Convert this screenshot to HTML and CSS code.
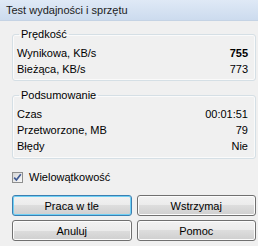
FILE: index.html
```html
<!DOCTYPE html>
<html lang="pl">
<head>
<meta charset="utf-8">
<link rel="stylesheet" href="styles.css">
</head>
<body>
<div class="titlebar">Test wydajności i sprzętu</div>
<div class="content">
  <fieldset class="group">
    <legend>Prędkość</legend>
    <div class="row"><span>Wynikowa, KB/s</span><span class="bold">755</span></div>
    <div class="row"><span>Bieżąca, KB/s</span><span>773</span></div>
  </fieldset>
  <fieldset class="group group2">
    <legend>Podsumowanie</legend>
    <div class="row"><span>Czas</span><span>00:01:51</span></div>
    <div class="row"><span>Przetworzone, MB</span><span>79</span></div>
    <div class="row"><span>Błędy</span><span>Nie</span></div>
  </fieldset>
  <label class="check">
    <span class="box"><svg width="9" height="9" viewBox="0 0 9 9"><path d="M1.2 4.6 L3.4 7 L7.8 1.3" fill="none" stroke="#3f5a93" stroke-width="1.7"/></svg></span>
    <span>Wielowątkowość</span>
  </label>
  <div class="buttons">
    <button class="btn default">Praca w tle</button>
    <button class="btn">Wstrzymaj</button>
    <button class="btn">Anuluj</button>
    <button class="btn">Pomoc</button>
  </div>
</div>
</body>
</html>
```

FILE: styles.css
```css
html, body {
  margin: 0;
  padding: 0;
  background: #f0f0f0;
  font-family: "Liberation Sans", Arial, sans-serif;
  font-size: 11px;
  color: #000;
}
.titlebar {
  height: 20px;
  line-height: 20px;
  padding-left: 6px;
  background: linear-gradient(#dfe9f6, #ccdbee);
  color: #1c1c1c;
  font-size: 11px;
  border-bottom: 1px solid #c5d3e4;
}
.content {
  padding: 7px 2px 0 12px;
}
.group {
  margin: 0;
  padding: 4px 7px 3px 4px;
  border: 1px solid #d5dfe5;
  border-radius: 3px;
  box-shadow: inset 0 0 0 1px #fafafa;
  min-width: 0;
}
.group legend {
  padding: 0 2px;
  margin-left: 2px;
  line-height: 13px;
}
.group2 {
  margin-top: 8px;
  padding-bottom: 4px;
}
.row {
  display: flex;
  justify-content: space-between;
  height: 16px;
  line-height: 16px;
}
.bold {
  font-weight: bold;
}
.check {
  display: flex;
  align-items: center;
  gap: 6px;
  margin-top: 11px;
  height: 15px;
  line-height: 15px;
}
.box {
  width: 9px;
  height: 9px;
  border: 1px solid #8e8f8f;
  background: linear-gradient(135deg, #d6d6d6, #fafafa);
  display: flex;
}
.buttons {
  display: grid;
  grid-template-columns: 1fr 1fr;
  column-gap: 5px;
  row-gap: 4px;
  margin-top: 10px;
}
.btn {
  height: 21px;
  padding: 0;
  font-family: "Liberation Sans", Arial, sans-serif;
  font-size: 11px;
  color: #000;
  border: 1px solid #707070;
  border-radius: 3px;
  background: linear-gradient(#f2f2f2 0%, #ebebeb 50%, #dddddd 50%, #cfcfcf 100%);
  box-shadow: inset 0 0 0 1px #fcfcfc;
}
.btn.default {
  border-color: #3c7fb1;
  box-shadow: inset 0 0 0 1px #6fd0f5;
}
```
